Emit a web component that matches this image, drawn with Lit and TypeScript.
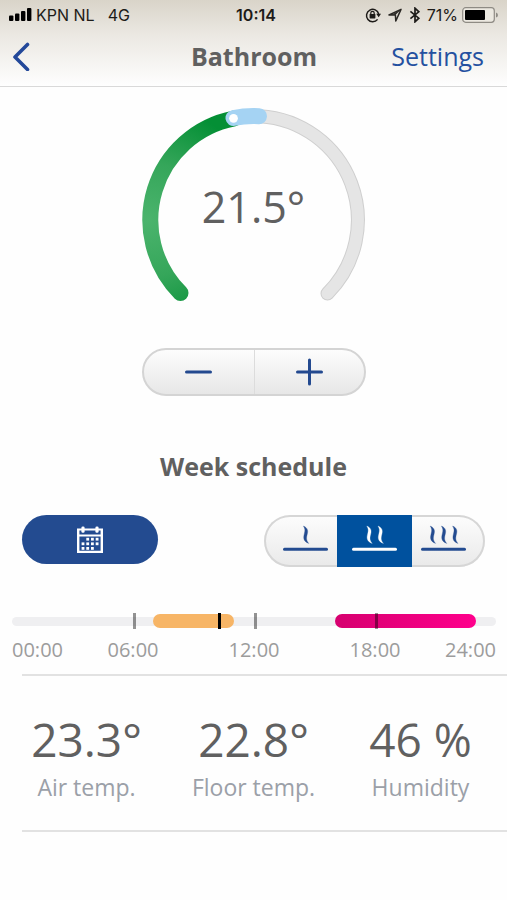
import { LitElement, html, css, svg } from "lit";
import { customElement, state } from "lit/decorators.js";
import { styleMap } from "lit/directives/style-map.js";

@customElement("status-bar")
class StatusBar extends LitElement {
  static styles = css`
    :host {
      display: grid;
      grid-template-columns: 1fr auto 1fr;
      align-items: center;
      height: 30px;
      padding: 0 8px 0 9px;
      font: 16px/20px Inter, "Liberation Sans", sans-serif;
      color: #1d1b18;
    }
    .left,
    .right {
      display: flex;
      align-items: center;
    }
    .left {
      gap: 4px;
    }
    .network {
      margin-left: 9px;
    }
    .right {
      justify-content: flex-end;
      gap: 6px;
    }
    .time {
      padding-left: 4px;
      font-weight: 600;
    }
    .power {
      display: flex;
      align-items: center;
      gap: 4px;
    }
    svg {
      display: block;
    }
  `;

  render() {
    return html`
      <div class="left">
        <svg width="23" height="14" viewBox="0 0 23 14" fill="#000" aria-hidden="true">
          <rect x="0" y="7.5" width="4.4" height="5.5" rx="1" />
          <rect x="6" y="5.5" width="4.4" height="7.5" rx="1" />
          <rect x="12" y="3" width="4.4" height="10" rx="1" />
          <rect x="18" y="0" width="4.4" height="13" rx="1" />
        </svg>
        <span>KPN NL</span>
        <span class="network">4G</span>
      </div>
      <div class="time">10:14</div>
      <div class="right">
        <svg width="16" height="16" viewBox="0 0 16 16" aria-hidden="true">
          <path d="M12.6 12.4 A6.2 6.2 0 1 1 13.7 7" fill="none" stroke="#1d1b18" stroke-width="1.5" />
          <path d="M11.2 6.8h4.8l-2.3 3.4z" fill="#1d1b18" />
          <rect x="4.6" y="7" width="5.8" height="4.4" rx=".6" fill="#1d1b18" />
          <path d="M5.8 7.2V6a1.7 1.7 0 0 1 3.4 0v1.2" fill="none" stroke="#1d1b18" stroke-width="1.2" />
        </svg>
        <svg width="16" height="16" viewBox="0 0 16 16" aria-hidden="true">
          <path d="M2 8 L14 2.4 L8.8 14 L8.4 8z" fill="none" stroke="#2a2824" stroke-width="1.5" stroke-linejoin="round" />
          <path d="M14 2.4 L8.4 8 L5 7.6z" fill="#2a2824" />
        </svg>
        <svg width="12" height="16" viewBox="0 0 12 16" aria-hidden="true">
          <path d="M1.4 4.4 L9.8 11.2 L6 14.8 V1.2 L9.8 4.8 L1.4 11.6" fill="none" stroke="#1d1b18" stroke-width="1.7" />
        </svg>
        <div class="power">
          <span>71%</span>
          <svg width="37" height="16" viewBox="0 0 37 16" aria-hidden="true">
            <rect x=".7" y=".7" width="31.6" height="14.6" rx="3" fill="#ece9e1" stroke="#8e8b84" stroke-width="1.2" />
            <rect x="3" y="3" width="20" height="10" rx="1" fill="#000" />
            <path d="M34 5.4 a2.7 2.7 0 0 1 0 5.2z" fill="#8e8b84" />
          </svg>
        </div>
      </div>
    `;
  }
}

@customElement("temperature-dial")
class TemperatureDial extends LitElement {
  static styles = css`
    :host {
      display: grid;
      justify-items: center;
    }
    svg,
    .value {
      grid-area: 1 / 1;
    }
    svg {
      display: block;
    }
    .value {
      padding-top: 69px;
      font-size: 43px;
      line-height: 60px;
    }
  `;

  render() {
    return html`
      <svg width="224" height="196" viewBox="0 0 224 196" fill="none" stroke-linecap="round" aria-hidden="true">
        <defs>
          <radialGradient id="warm" gradientUnits="userSpaceOnUse" cx="6" cy="112" r="115">
            <stop offset="0" stop-color="#4bb46d" />
            <stop offset=".5" stop-color="#35a65a" />
            <stop offset="1" stop-color="#048f35" />
          </radialGradient>
        </defs>
        <path d="M118 8.2 A104 104 0 0 1 185.5 185.5" stroke="#cfcfcf" stroke-width="14" />
        <path d="M118 8.2 A104 104 0 0 1 185.5 185.5" stroke="#e5e5e5" stroke-width="12" />
        <path d="M38.5 185 A103.4 103.4 0 0 1 92 10.5" stroke="url(#warm)" stroke-width="16" />
        <path d="M91.5 10 A104 104 0 0 1 117 8.2" stroke="#a5d3f3" stroke-width="16" />
        <circle cx="91.5" cy="10.3" r="4.4" fill="#fff" />
      </svg>
      <div class="value">21.5°</div>
    `;
  }
}

type Mark = { hour: number; label: string };
type Period = { from: number; to: number; fill: string };

@customElement("day-timeline")
class DayTimeline extends LitElement {
  static styles = css`
    :host {
      display: block;
      padding: 0 11px 0 12px;
    }
    .bar {
      position: relative;
      display: flex;
      align-items: center;
      height: 16px;
    }
    .track {
      flex: 1;
      height: 9px;
      border-radius: 5px;
      background: #efeff1;
    }
    .period {
      position: absolute;
      top: 1px;
      height: 14px;
      border-radius: 7px;
    }
    .tick {
      position: absolute;
      top: 0;
      width: 3px;
      height: 16px;
      background: #000;
      opacity: 0.42;
    }
    .now {
      opacity: 1;
    }
    .labels {
      display: grid;
      grid-template-columns: 1fr 2fr 2fr 2fr 1fr;
      padding-top: 8px;
      font-size: 20px;
      line-height: 26px;
      text-align: center;
      color: #9c9c9c;
    }
    .labels span:first-child {
      text-align: left;
    }
    .labels span:last-child {
      text-align: right;
    }
  `;

  private marks: Mark[] = [
    { hour: 0, label: "00:00" },
    { hour: 6, label: "06:00" },
    { hour: 12, label: "12:00" },
    { hour: 18, label: "18:00" },
    { hour: 24, label: "24:00" },
  ];

  private periods: Period[] = [
    { from: 7, to: 11, fill: "#f7b566" },
    { from: 16, to: 23, fill: "linear-gradient(90deg, #d6006f, #ff008c)" },
  ];

  private at(hour: number) {
    return `${(hour / 24) * 100}%`;
  }

  render() {
    return html`
      <div class="bar">
        <div class="track"></div>
        ${this.periods.map(
          (p) => html`<div
            class="period"
            style=${styleMap({ left: this.at(p.from), width: this.at(p.to - p.from), background: p.fill })}
          ></div>`
        )}
        ${this.marks
          .slice(1, -1)
          .map((m) => html`<div class="tick" style=${styleMap({ left: this.at(m.hour) })}></div>`)}
        <div class="tick now" style=${styleMap({ left: this.at(10.23) })}></div>
      </div>
      <div class="labels">${this.marks.map((m) => html`<span>${m.label}</span>`)}</div>
    `;
  }
}

@customElement("app-root")
class AppRoot extends LitElement {
  static styles = css`
    * {
      box-sizing: border-box;
    }
    :host {
      display: block;
      min-height: 100vh;
      background: #fefefe;
      font-family: "Open Sans", "Noto Sans", sans-serif;
      color: #606060;
    }
    header {
      border-bottom: 1px solid #d9d9d9;
      background: linear-gradient(#d9d4c9, #ebe8e2 40%, #fefefe);
    }
    .nav {
      display: grid;
      grid-template-columns: 1fr auto 1fr;
      align-items: center;
      height: 56px;
      padding: 0 23px 4px 8px;
    }
    button {
      display: grid;
      place-items: center;
      margin: 0;
      padding: 0;
      border: 0;
      background: none;
      cursor: pointer;
    }
    svg {
      display: block;
    }
    .back {
      width: 28px;
      height: 40px;
    }
    h1,
    h2 {
      margin: 0;
      font-size: 25px;
      line-height: 34px;
      font-weight: 700;
      text-align: center;
    }
    h1 {
      padding-left: 16px;
    }
    .settings {
      justify-self: end;
      font-size: 25px;
      line-height: 34px;
      color: #2450a0;
      text-decoration: none;
    }
    temperature-dial {
      margin-top: 21px;
    }
    .stepper {
      display: grid;
      grid-template-columns: 1fr 1fr;
      width: 224px;
      height: 48px;
      margin: 44px auto 0;
      border: 2px solid #d4d4d4;
      border-radius: 24px;
      background: linear-gradient(#fdfdfd, #e7e7e7);
    }
    .stepper button + button {
      border-left: 1px solid #dcdcdc;
    }
    h2 {
      margin-top: 53px;
    }
    .modes {
      display: flex;
      justify-content: space-between;
      align-items: flex-start;
      margin-top: 32px;
      padding: 0 22px;
    }
    .calendar {
      width: 136px;
      height: 49px;
      border-radius: 25px;
      background: #234b90;
    }
    .levels {
      display: grid;
      grid-template-columns: 73px 75px 73px;
      height: 52px;
      margin: 0;
      padding: 0;
      border: 0;
      border-radius: 26px;
      box-shadow: inset 0 0 0 2px #d6d6d6;
      background: linear-gradient(#fdfdfd, #e9e9e9);
    }
    .level {
      display: grid;
      place-items: center;
      padding-bottom: 6px;
      color: #234b90;
      cursor: pointer;
    }
    .level:has(input:checked) {
      background: #00519e;
      color: #fff;
    }
    .level input {
      grid-area: 1 / 1;
      width: 1px;
      height: 1px;
      margin: 0;
      opacity: 0;
    }
    .level svg {
      grid-area: 1 / 1;
    }
    .level:first-of-type {
      padding-left: 10px;
    }
    .level:last-of-type {
      padding-right: 10px;
    }
    day-timeline {
      margin-top: 46px;
    }
    .stats {
      display: grid;
      grid-template-columns: repeat(3, 1fr);
      margin: 11px 0 0;
      padding: 0 3px;
      text-align: center;
    }
    .rule {
      height: 2px;
      margin: 11px 0 0 22px;
      border: 0;
      background: #e2e2e2;
    }
    .stat {
      display: flex;
      flex-direction: column-reverse;
      padding-top: 20px;
    }
    dt {
      font-size: 23px;
      line-height: 32px;
      color: #9ba0a8;
    }
    dd {
      margin: 0;
      font-size: 46px;
      line-height: 64px;
    }
    .end {
      margin-top: 27px;
    }
  `;

  @state() private level = 2;

  private flames(count: number) {
    const start = 23 - (count - 1) * 5.6;
    return svg`
      ${Array.from({ length: count }, (_, i) => {
        const x = start + i * 11.2;
        return svg`<path d="M${x - 2.6} 1 c4.6 2 4.8 5 3.8 8.4 c-1 3.6 -1 6 1.6 9 c-5.4 -2 -5.6 -5.4 -4.6 -9.2 c1 -3.8 1 -5.2 -.8 -8.2z" fill="currentColor" stroke="currentColor" stroke-width=".3"/>`;
      })}
      <path d="M1.5 24.3h42" stroke="currentColor" stroke-width="3" stroke-linecap="round"/>`;
  }

  render() {
    return html`
      <header>
        <status-bar></status-bar>
        <nav class="nav">
          <button class="back" aria-label="Back">
            <svg width="22" height="30" viewBox="0 0 22 30" fill="none" stroke="#23489a" stroke-width="3.6" stroke-linecap="round" stroke-linejoin="round">
              <path d="M16.5 3.5 L4 16 L16.5 28.5" />
            </svg>
          </button>
          <h1>Bathroom</h1>
          <a class="settings" href="#settings">Settings</a>
        </nav>
      </header>
      <main>
        <temperature-dial></temperature-dial>
        <div class="stepper">
          <button aria-label="Lower temperature">
            <svg width="28" height="28" viewBox="0 0 28 28" stroke="#23498f" stroke-width="3" stroke-linecap="round">
              <path d="M1.5 14h24" />
            </svg>
          </button>
          <button aria-label="Raise temperature">
            <svg width="28" height="28" viewBox="0 0 28 28" stroke="#23498f" stroke-width="3" stroke-linecap="round">
              <path d="M2.5 14h24M14.5 2v24" />
            </svg>
          </button>
        </div>
        <h2>Week schedule</h2>
        <div class="modes">
          <button class="calendar" aria-label="Open calendar">
            <svg width="28" height="30" viewBox="0 0 28 30" fill="#fff">
              <path d="M1 3.4h26v2.2H1z M1 4h2.4v24H1z M24.6 4H27v24h-2.4z M1 25.8h26V28H1z M2 9.4h24v2H2z" />
              <rect x="5.4" y="1.4" width="3.2" height="6.4" rx="1.4" />
              <rect x="19.4" y="1.4" width="3.2" height="6.4" rx="1.4" />
              ${[0, 1, 2].map((row) =>
                [0, 1, 2, 3].map((col) =>
                  (row === 0 && col === 0) || (row === 2 && col === 3)
                    ? null
                    : svg`<rect x=${5.6 + col * 4.7} y=${12.8 + row * 4.6} width="2.8" height="2.8"/>`
                )
              )}
            </svg>
          </button>
          <fieldset class="levels" aria-label="Heating level">
            ${[1, 2, 3].map(
              (n) => html`<label class="level">
                <input
                  type="radio"
                  name="level"
                  aria-label="Level ${n}"
                  .checked=${this.level === n}
                  @change=${() => (this.level = n)}
                />
                <svg width="45" height="26" viewBox="0 0 45 26" fill="none">${this.flames(n)}</svg>
              </label>`
            )}
          </fieldset>
        </div>
        <day-timeline></day-timeline>
        <hr class="rule" />
        <dl class="stats">
          <div class="stat"><dt>Air temp.</dt><dd>23.3°</dd></div>
          <div class="stat"><dt>Floor temp.</dt><dd>22.8°</dd></div>
          <div class="stat"><dt>Humidity</dt><dd>46 %</dd></div>
        </dl>
        <hr class="rule end" />
      </main>
    `;
  }
}
